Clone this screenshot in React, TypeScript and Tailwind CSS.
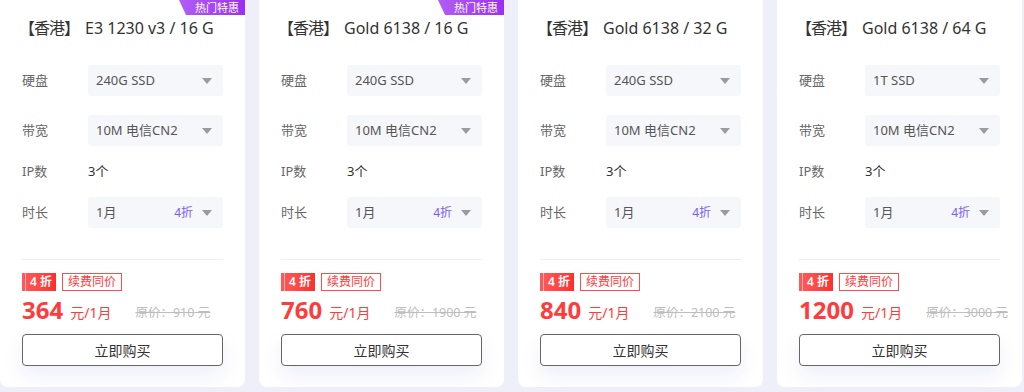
import React from "react";

type Card = {
  title: string;
  disk: string;
  hot: boolean;
  price: string;
  orig: string;
};

const cards: Card[] = [
  { title: "E3 1230 v3 / 16 G", disk: "240G SSD", hot: true, price: "364", orig: "910" },
  { title: "Gold 6138 / 16 G", disk: "240G SSD", hot: true, price: "760", orig: "1900" },
  { title: "Gold 6138 / 32 G", disk: "240G SSD", hot: false, price: "840", orig: "2100" },
  { title: "Gold 6138 / 64 G", disk: "1T SSD", hot: false, price: "1200", orig: "3000" },
];

function Caret() {
  return (
    <svg width="10" height="6" viewBox="0 0 10 6" className="shrink-0">
      <path d="M0 0 L10 0 L5 6 Z" fill="#9a9aa3" />
    </svg>
  );
}

function Select({ value, extra }: { value: string; extra?: string }) {
  return (
    <div className="flex h-[31px] w-[135px] items-center rounded-[3px] bg-[#f6f7fb] pl-[8px] pr-[11px] text-[13px] text-[#555]">
      <span className="flex-1 whitespace-nowrap">{value}</span>
      {extra && <span className="mr-[9px] text-[12px] text-[#7a5cf5]">{extra}</span>}
      <Caret />
    </div>
  );
}

function Row({ label, children }: { label: string; children: React.ReactNode }) {
  return (
    <div className="flex items-center">
      <div className="w-[66px] text-[13px] text-[#666]">{label}</div>
      {children}
    </div>
  );
}

function CardView({ c }: { c: Card }) {
  return (
    <div className="relative flex h-[387px] w-[245px] shrink-0 flex-col rounded-b-[8px] bg-white px-[22px]">
      {c.hot && (
        <div
          className="absolute right-0 top-0 flex h-[15px] w-[66px] items-center justify-end bg-gradient-to-r from-[#b15cf6] to-[#9a2ff0] pr-[6px] text-[11px] leading-none text-white"
          style={{ clipPath: "polygon(0 0, 100% 0, 100% 100%, 7px 100%)" }}
        >
          热门特惠
        </div>
      )}
      <div className="mt-[16px] flex h-[24px] items-center whitespace-nowrap text-[16px] leading-[24px] text-[#333]">
        <span className="-ml-[3px] tracking-[-1px]">【香港】</span>
        <span className="ml-[6px]">{c.title}</span>
      </div>
      <div className="mt-[25px]">
        <Row label="硬盘">
          <Select value={c.disk} />
        </Row>
      </div>
      <div className="mt-[19px]">
        <Row label="带宽">
          <Select value="10M 电信CN2" />
        </Row>
      </div>
      <div className="mt-[10px] flex h-[31px] items-center">
        <div className="w-[66px] text-[13px] text-[#666]">IP数</div>
        <div className="text-[13px] text-[#333]">3个</div>
      </div>
      <div className="mt-[10px]">
        <Row label="时长">
          <Select value="1月" extra="4折" />
        </Row>
      </div>
      <div className="mt-[31px] h-px bg-[#eeeeee]" />
      <div className="mt-[13px] flex items-center gap-[6px]">
        <div className="relative flex h-[18px] w-[34px] items-center justify-center bg-gradient-to-r from-[#ff5a5a] to-[#ff2d2d] text-[12px] font-semibold leading-none text-white">
          <div className="absolute left-[3px] top-0 h-full w-px bg-[#ffb3b3]" />
          <span className="whitespace-nowrap pl-[4px]">4 折</span>
        </div>
        <div className="flex h-[18px] items-center whitespace-nowrap border border-[#ff4d4d] px-[5px] text-[12px] leading-none text-[#ff3b3b]">
          续费同价
        </div>
      </div>
      <div className="mt-[6px] flex h-[26px] items-end whitespace-nowrap">
        <span className="shrink-0 text-[24px] font-bold leading-[26px] text-[#ff3c3c]">{c.price}</span>
        <span className="mb-[1px] ml-[7px] shrink-0 text-[14px] leading-[18px] text-[#ff3c3c]">元/1月</span>
        <span className="mb-[1px] ml-[24px] shrink-0 text-[12.5px] leading-[18px] text-[#bdbdbd] line-through">
          原价：{c.orig} 元
        </span>
      </div>
      <button className="mt-[11px] flex h-[32px] w-full items-center justify-center rounded-[4px] border border-[#666] bg-white text-[14px] text-[#333] shadow-[0_10px_18px_rgba(120,120,220,0.12)]">
        立即购买
      </button>
    </div>
  );
}

export default function App() {
  return (
    <div
      className="flex h-[392px] w-[1024px] gap-[14px] overflow-hidden bg-[#efeff9]"
      style={{ fontFamily: '"Noto Sans", "Noto Sans CJK SC", sans-serif' }}
    >
      {cards.map((c, i) => (
        <CardView key={i} c={c} />
      ))}
    </div>
  );
}
